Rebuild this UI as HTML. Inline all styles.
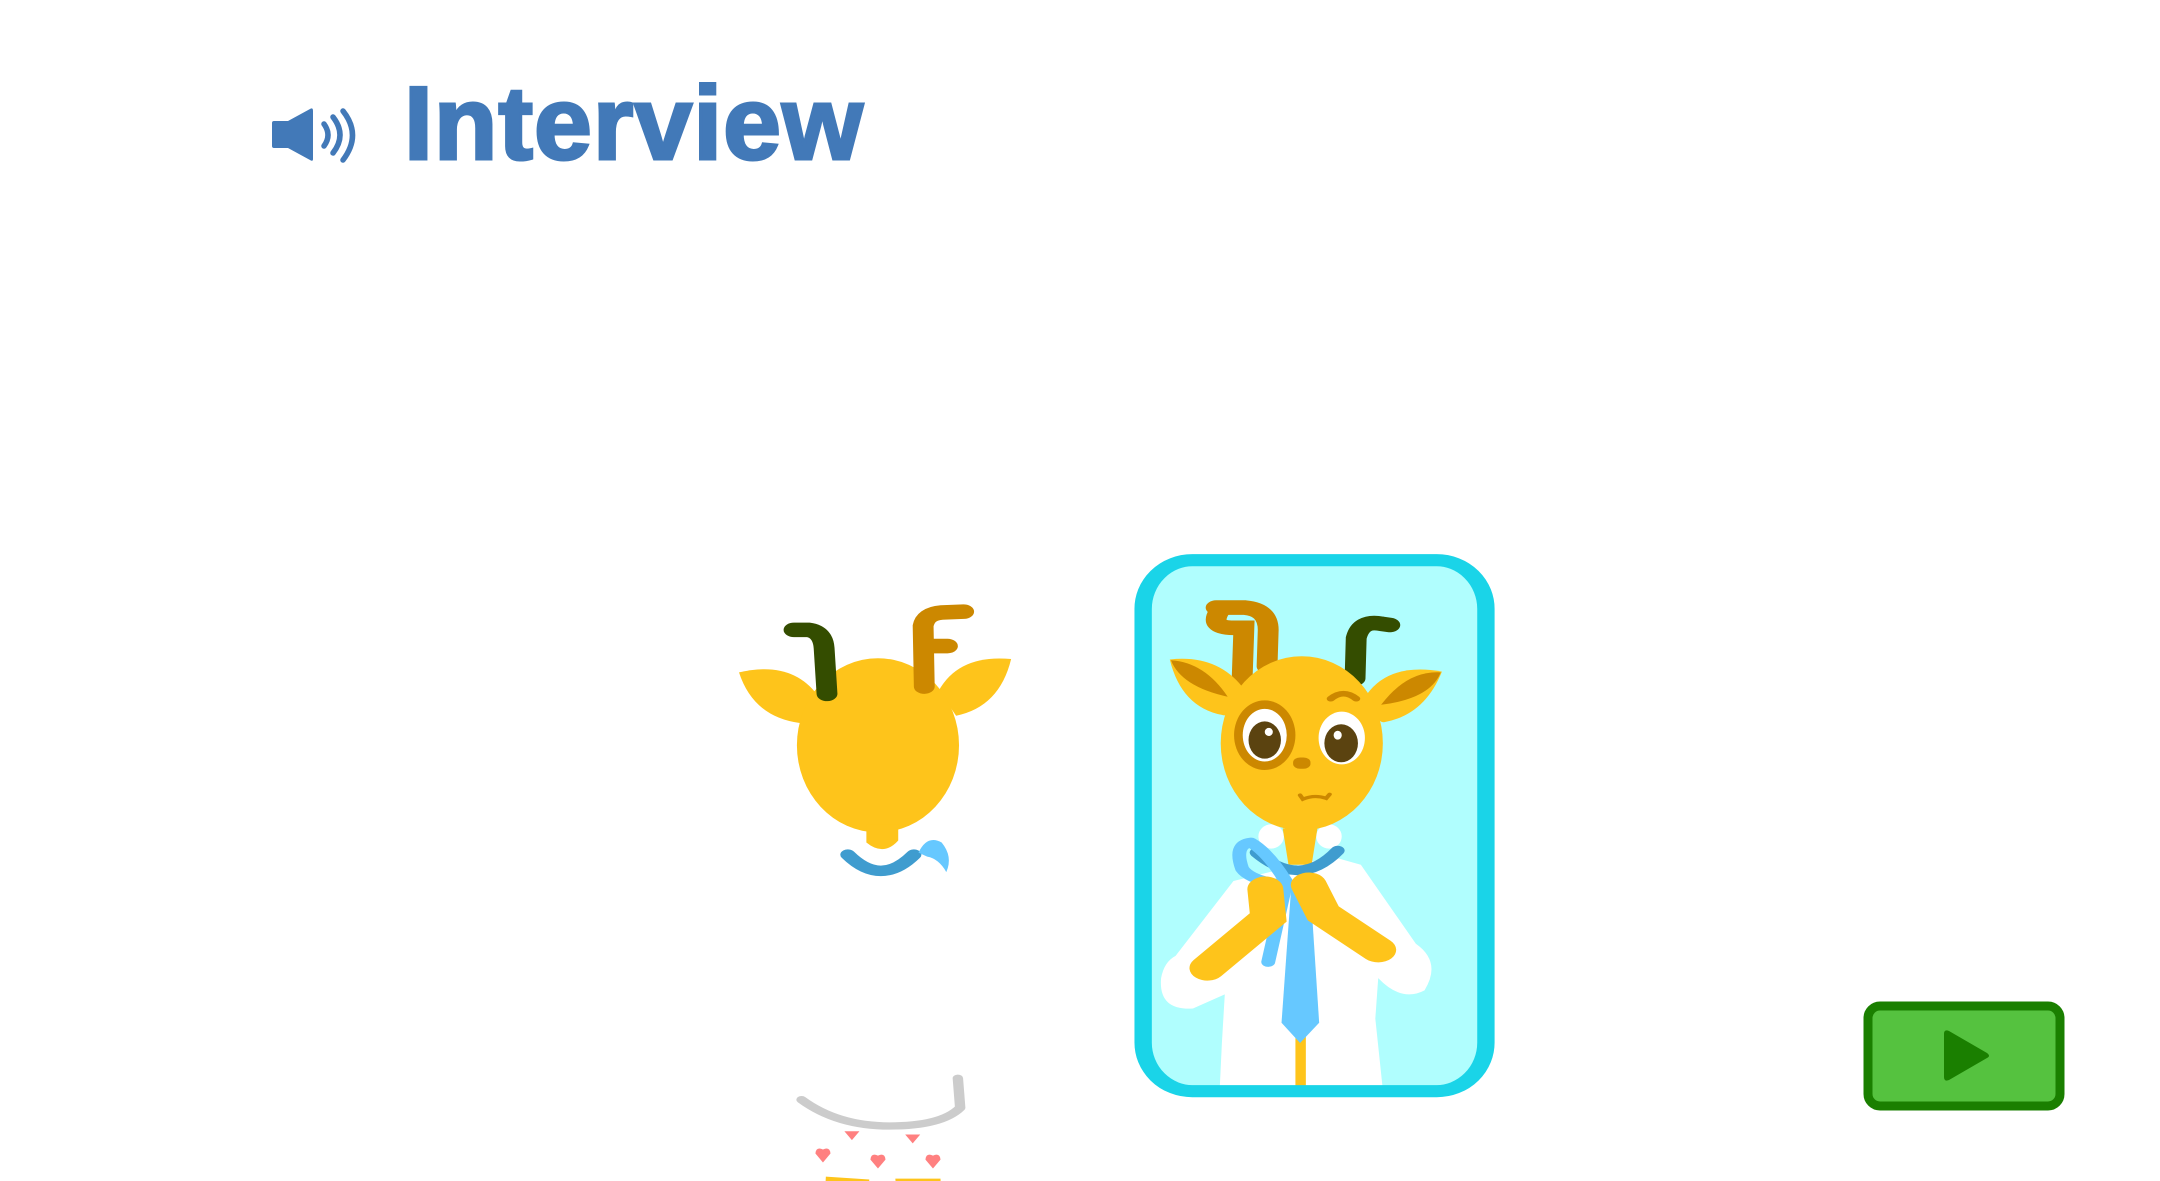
<!DOCTYPE html>
<html><head><meta charset="utf-8"><style>
html,body{margin:0;padding:0;background:#fff;width:2160px;height:1181px;overflow:hidden}
.t{position:absolute;left:404px;top:72px;font:bold 104px/1 "Liberation Sans",sans-serif;color:#4279b8;-webkit-text-stroke:3px #4279b8;letter-spacing:1px}
svg{position:absolute;left:0;top:0}
</style></head><body>
<div class="t">Interview</div>
<svg width="2160" height="1181" viewBox="0 0 2160 1181">
<g fill="#4279b8">
<path d="M274 121h14l22-12q3-2 3 2v48q0 3-3 1l-22-12h-14q-2 0-2-2v-23q0-2 2-2z"/>
<g fill="none" stroke="#4279b8" stroke-width="5.5" stroke-linecap="round"><path d="M324 124q8 11 0 22"/><path d="M333 117q14 18 0 36"/><path d="M343 111q19 24 0 49"/></g>
</g>
<rect x="1868" y="1006" width="192" height="100" rx="12" fill="#55c23f" stroke="#1a7f00" stroke-width="9"/>
<path d="M1944 1034q0-5 5-3l38 22q4 3 0 5l-38 22q-5 2-5-3z" fill="#1a7f00"/>
<g transform="matrix(0.579,0,0,0.405,695,559)">
<defs><clipPath id="mc"><rect x="774" y="3" width="592" height="1311" rx="85" ry="120"/></clipPath></defs>
<rect x="774" y="3" width="592" height="1311" rx="85" ry="120" fill="#b0fefe"/>
<g clip-path="url(#mc)"><g transform="translate(0,35)">
<g fill="#fff">
<path d="M930 760 L1100 700 L1150 720 L1245 915 Q1290 960 1260 1030 Q1220 1060 1180 1000 L1175 1100 L1190 1303 L1190 1400 L902 1400 L910 1160 L915 1040 L860 1075 Q800 1080 805 1000 Q810 960 830 945 Z"/>
<ellipse cx="995" cy="650" rx="22" ry="30"/><ellipse cx="1095" cy="650" rx="22" ry="30"/>
</g>
<rect x="1037" y="1140" width="18" height="260" fill="#fec41b"/>
<path d="M1015 630 L1075 630 L1065 720 L1025 720 Z" fill="#fec41b"/>
<path d="M970 690 Q1045 780 1110 685" fill="none" stroke="#3f9ccf" stroke-width="24" stroke-linecap="round"/>
<path d="M1030 770 L1062 760 L1078 1110 L1045 1160 L1013 1110 Z" fill="#66c8ff"/>
<path d="M1020 760 Q990 690 960 665 Q930 670 945 730 Q960 760 1020 770 L990 960" fill="none" stroke="#66c8ff" stroke-width="24" stroke-linecap="round" stroke-linejoin="round"/>
<g stroke="#fec41b" stroke-width="62" stroke-linecap="round" fill="none">
<path d="M985 780 L990 850 L885 975"/><path d="M1060 770 L1085 840 L1180 930"/>
</g>
<path d="M905 95 Q888 135 930 135 L948 135 L945 260" fill="none" stroke="#cc8800" stroke-width="36" stroke-linecap="round"/>
<path d="M900 85 L950 85 Q990 90 990 140 L988 230" fill="none" stroke="#cc8800" stroke-width="36" stroke-linecap="round"/>
<path d="M1140 260 L1142 160 Q1150 115 1185 125 L1200 128" fill="none" stroke="#344d00" stroke-width="36" stroke-linecap="round"/>
<path d="M820 213 Q900 200 945 280 Q930 360 910 350 Q840 330 820 213Z" fill="#fec41b"/>
<path d="M822 215 Q880 220 920 305 Q840 280 822 215Z" fill="#cc8800"/>
<path d="M1290 243 Q1200 220 1160 300 Q1175 370 1190 368 Q1260 350 1290 243Z" fill="#fec41b"/>
<path d="M1288 245 Q1230 240 1185 325 Q1270 310 1288 245Z" fill="#cc8800"/>
<ellipse cx="1048" cy="420" rx="140" ry="215" fill="#fec41b"/>
<ellipse cx="984" cy="400" rx="53" ry="86" fill="#cc8800"/>
<ellipse cx="984" cy="400" rx="38" ry="65" fill="#fff"/>
<ellipse cx="984" cy="412" rx="28" ry="46" fill="#5b4310"/><ellipse cx="991" cy="392" rx="7" ry="10" fill="#fff"/>
<ellipse cx="1117" cy="407" rx="40" ry="65" fill="#fff"/>
<ellipse cx="1116" cy="420" rx="29" ry="47" fill="#5b4310"/><ellipse cx="1110" cy="400" rx="7" ry="11" fill="#fff"/>
<rect x="1033" y="455" width="30" height="28" rx="12" fill="#cc8800"/>
<path d="M1098 310 Q1120 285 1142 310" fill="none" stroke="#cc8800" stroke-width="14" stroke-linecap="round"/>
<path d="M1045 548 L1050 558 Q1070 546 1090 556 L1096 546" fill="none" stroke="#cc8800" stroke-width="8" stroke-linecap="round"/>
</g></g>
<rect x="774" y="3" width="592" height="1311" rx="85" ry="120" fill="none" stroke="#1ad4e8" stroke-width="30"/>
<g transform="translate(6,35)">
<path d="M70 245 Q160 215 205 300 L175 370 Q95 355 70 245Z" fill="#fec41b"/>
<path d="M540 212 Q450 200 415 290 L445 352 Q520 330 540 212Z" fill="#fec41b"/>
<ellipse cx="310" cy="425" rx="140" ry="215" fill="#fec41b"/>
<path d="M290 620 L345 620 L345 660 Q320 700 290 665Z" fill="#fec41b"/>
<path d="M165 140 L190 140 Q215 145 217 185 L222 298" fill="none" stroke="#344d00" stroke-width="36" stroke-linecap="round"/>
<path d="M390 280 L388 130 Q392 100 420 97 L458 95" fill="none" stroke="#cc8800" stroke-width="36" stroke-linecap="round"/>
<path d="M395 180 L430 180" fill="none" stroke="#cc8800" stroke-width="36" stroke-linecap="round"/>
<path d="M258 695 Q315 775 372 695" fill="none" stroke="#3f9ccf" stroke-width="26" stroke-linecap="round"/>
<path d="M380 690 Q395 645 420 665 Q440 700 428 738 Q415 705 395 700Z" fill="#66c8ff"/>
</g>
<g transform="translate(6,0)">
<path d="M178 1335 Q240 1400 330 1400 Q420 1400 452 1355 L448 1282" fill="none" stroke="#cccccc" stroke-width="18" stroke-linecap="round" stroke-linejoin="round"/>
<g fill="#ff8080">
<path d="M215 1490 L202 1468 Q203 1450 215 1458 Q227 1450 228 1468Z"/>
<path d="M310 1505 L297 1483 Q298 1465 310 1473 Q322 1465 323 1483Z"/>
<path d="M405 1505 L392 1483 Q393 1465 405 1473 Q417 1465 418 1483Z"/>
<path d="M265 1435 L252 1413 L278 1413Z"/><path d="M370 1443 L357 1421 L383 1421Z"/>
</g>
<path d="M220 1525 L295 1532 L293 1580 L218 1580Z" fill="#fec41b"/>
<path d="M340 1530 L418 1530 L420 1580 L343 1580Z" fill="#fec41b"/>
</g>
</g>
</svg>
</body></html>
